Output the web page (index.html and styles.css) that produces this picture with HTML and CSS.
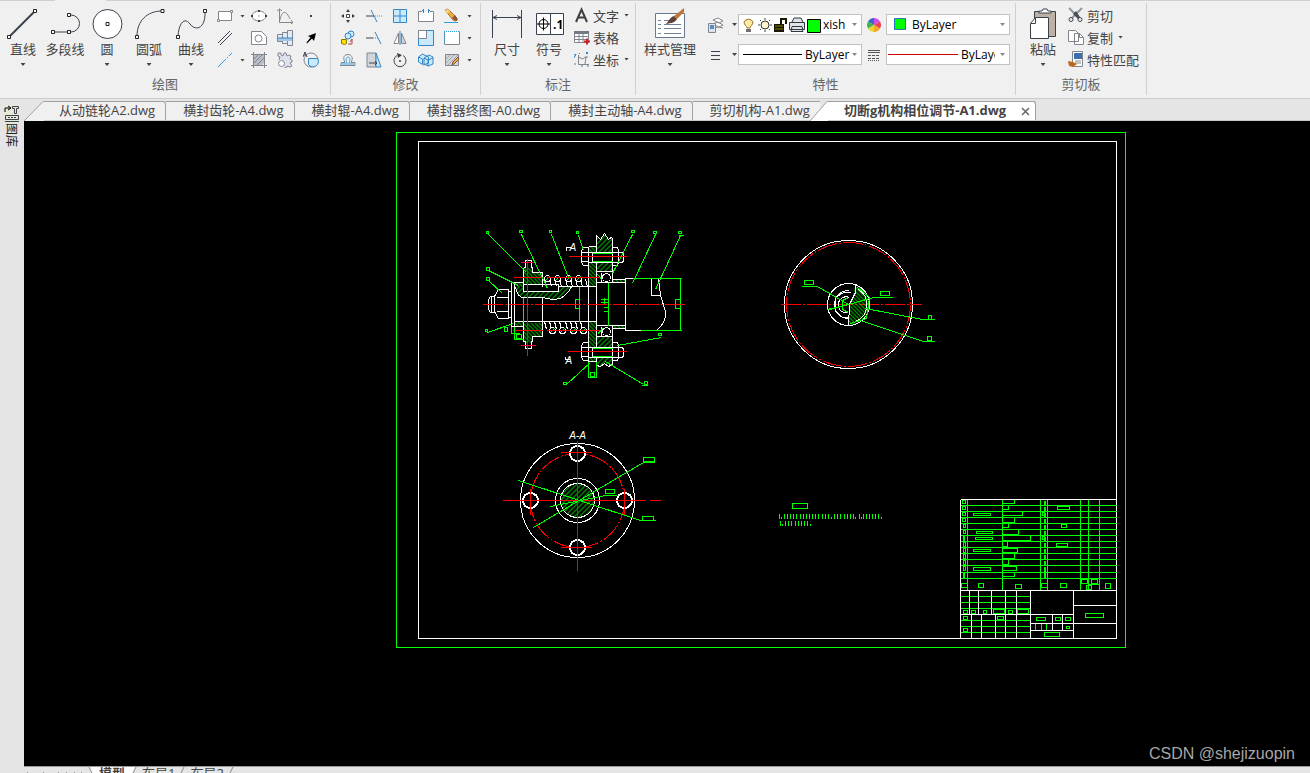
FILE: index.html
```
<!DOCTYPE html>
<html lang="zh-CN">
<head>
  <meta charset="UTF-8">
  <meta name="viewport" content="width=device-width, initial-scale=1.0">
  <title>切断机构相位调节-A1.dwg</title>
  <link rel="stylesheet" href="styles.css">
</head>
<body>
  <div class="ribbon">
    <!-- Draw -->
    <section class="group draw">
      <div class="group-body">
        <button class="big-btn">
          <svg width="32" height="32" viewBox="0 0 32 32"><path d="M3 28L28 3" class="ink thick"/><path d="M0.500 27.500h3v3h-3zM26.500 1.500h3v3h-3z" class="node"/></svg>
          <span>直线</span><i class="arrow"></i>
        </button>
        <button class="big-btn">
          <svg width="32" height="32" viewBox="0 0 32 32"><path d="M4 24H19M19 7h3a8.500 8.500 0 0 1 0 17h-3" class="ink"/><path d="M2.500 22.500h3v3h-3zM18.500 22.500h3v3h-3zM18.500 5.500h3v3h-3z" class="node"/></svg>
          <span>多段线</span>
        </button>
        <button class="big-btn">
          <svg width="32" height="32" viewBox="0 0 32 32"><circle cx="16.500" cy="16" r="14.500" class="ink fill"/><path d="M15 14.500h3v3h-3z" class="node"/></svg>
          <span>圆</span><i class="arrow"></i>
        </button>
        <button class="big-btn">
          <svg width="32" height="32" viewBox="0 0 32 32"><path d="M4 28C4 13 14 3 29 3" class="ink"/><path d="M2.500 27.500h3v3h-3zM28 1.500h3v3h-3z" class="node"/></svg>
          <span>圆弧</span><i class="arrow"></i>
        </button>
        <button class="big-btn">
          <svg width="32" height="32" viewBox="0 0 32 32"><path d="M3 28C4 14 10 9 15 16C21 24 31 20 30 3" class="ink"/><path d="M1.500 27.500h3v3h-3zM28.500 1.500h3v3h-3z" class="node"/></svg>
          <span>曲线</span><i class="arrow"></i>
        </button>
        <div class="tools draw-tools">
          <button class="tool" aria-label="矩形"><svg width="16" height="16" viewBox="0 0 16 16"><path d="M1.500 3.500h13v9h-13z" class="grey fill"/><path d="M.5 11.500h2v2h-2zM13.500 2.500h2v2h-2z" class="grey fill"/></svg><i class="arrow"></i></button>
          <button class="tool" aria-label="椭圆"><svg width="16" height="16" viewBox="0 0 16 16"><ellipse cx="8" cy="8" rx="7" ry="5" class="grey fill"/><path d="M7.500 7.500h1v1h-1zM7 2h2v2H7zM0 7h2v2H0zM14 7h2v2h-2zM7 12h2v2H7z" class="dark"/></svg></button>
          <button class="tool" aria-label="函数曲线"><svg width="16" height="16" viewBox="0 0 16 16"><path d="M2.500 1v13.500H16M0 3l2.500-2L5 3M14 12l2 2.500-2 1.500M3 12C5 2 9 2 13 11" class="grey"/></svg></button>
          <button class="tool" aria-label="点"><svg width="16" height="16" viewBox="0 0 16 16"><path d="M7 7h2v2H7z" class="dark"/></svg></button>
          <button class="tool" aria-label="平行线"><svg width="16" height="16" viewBox="0 0 16 16"><path d="M1 13L13 1M3 15L15 3" class="ink"/></svg></button>
          <button class="tool" aria-label="轮廓"><svg width="16" height="16" viewBox="0 0 16 16"><path d="M.5 1.500h10l5 5v8H.5z" class="grey fill"/><circle cx="7.500" cy="8.500" r="3.500" class="grey"/></svg></button>
          <button class="tool" aria-label="轴"><svg width="16" height="16" viewBox="0 0 16 16"><path d="M.5 4.500h5v7h-5zM5.500 2.500h5v11h-5zM10.500.500h5v15h-5z" class="grey pale"/><path d="M1 8h14v3H1z" fill="#a9c8e6"/><path d="M0 8h16" class="blue"/></svg></button>
          <button class="tool" aria-label="箭头"><svg width="16" height="16" viewBox="0 0 16 16"><path d="M13 3L11 11 9 8.500 4 13.500 3.500 12.500 7.500 7.500 5 6z" fill="#000"/></svg></button>
          <button class="tool" aria-label="中心线"><svg width="16" height="16" viewBox="0 0 16 16"><path d="M1 15L9 7M10 6l1-1M12 4l3-3" class="cyan"/></svg><i class="arrow"></i></button>
          <button class="tool" aria-label="填充"><svg width="16" height="16" viewBox="0 0 16 16"><path d="M2.500 2.500h11v8l-3 3h-8z" fill="#b8bcc4"/><path d="M3 11L11 3M3 7l4-4M6 13l7-7M2.500 0v16M0 2.500h16M0 13.500h16M13.500 0v16" class="grey"/></svg></button>
          <button class="tool" aria-label="齿轮"><svg width="16" height="16" viewBox="0 0 16 16"><path d="M1 1h3v2l2 1 1-3h2l1 3 2-1 2 1-1 3 2 1v2l-2 1 2 3-2 1-3-1-1 2H7M1 1v3l2 1-1 3" class="grey lavender"/><circle cx="4.500" cy="11.500" r="3" class="grey fill"/></svg></button>
          <button class="tool" aria-label="局部放大"><svg width="16" height="16" viewBox="0 0 16 16"><circle cx="8" cy="8" r="7" class="grey"/><path d="M5.500 6.500h9a5 5 0 0 1-9 6z" class="blue sky"/><path d="M0 5l2-5 2 5M1 3h2" class="ink"/></svg></button>
        </div>
      </div>
      <h2>绘图</h2>
    </section>

    <!-- Modify -->
    <section class="group modify">
      <div class="group-body">
        <div class="tools modify-tools">
          <button class="tool" aria-label="移动"><svg width="16" height="16" viewBox="0 0 16 16"><path d="M6.500 6.500h3v3h-3z" class="ink fill"/><path d="M8 1l2 3H6zM8 15l2-3H6zM1 8l3-2v4zM15 8l-3-2v4z" class="dark"/></svg></button>
          <button class="tool" aria-label="修剪"><svg width="16" height="16" viewBox="0 0 16 16"><path d="M5 2l6 12" class="blue"/><path d="M0 8h8" class="ink"/><path d="M9 8h7" class="cyan dots"/></svg></button>
          <button class="tool" aria-label="阵列"><svg width="16" height="16" viewBox="0 0 16 16"><path d="M1.500 1.500h13v13h-13zM8 1v14M1 8h14" class="blue sky"/></svg></button>
          <button class="tool" aria-label="打断"><svg width="16" height="16" viewBox="0 0 16 16"><path d="M4 3.500H.500v10h15v-10H12" class="grey fill"/><path d="M5.500 1v4M10.500 1v4M4 2.500h2M10 2.500h2" class="blue"/></svg></button>
          <button class="tool" aria-label="删除"><svg width="16" height="16" viewBox="0 0 16 16"><path d="M1 2l3-1 9 9-1 3-3-1z" fill="#f2ae3d" stroke="#a66b22"/><path d="M1 2l3-1 2 2-3 3z" fill="#f6d47c"/><path d="M8 10l3-3 3 5-2 1z" fill="#875638"/><path d="M0 14.500h14" class="cyan"/></svg><i class="arrow"></i></button>
          <button class="tool" aria-label="复制对象"><svg width="16" height="16" viewBox="0 0 16 16"><circle cx="11" cy="4" r="3" class="blue sky"/><circle cx="8" cy="6" r="3" class="blue sky"/><path d="M1.500 9.500h5v4l-2 1-3-1z" fill="#ffe000" stroke="#8b7800"/><path d="M8 14h4V9l-2 3" fill="none" stroke="#ad4343"/></svg></button>
          <button class="tool" aria-label="延伸"><svg width="16" height="16" viewBox="0 0 16 16"><path d="M9 2l6 12" class="blue"/><path d="M0 8h7" class="ink"/><path d="M7 8h5" class="cyan dots"/></svg></button>
          <button class="tool" aria-label="镜像"><svg width="16" height="16" viewBox="0 0 16 16"><path d="M6.500 3v10.500H2z" class="grey fill"/><path d="M9.500 3v10.500H14z" class="grey gray-fill"/><path d="M8 1v14" class="blue"/></svg></button>
          <button class="tool" aria-label="缩放"><svg width="16" height="16" viewBox="0 0 16 16"><path d="M.5.500h15v15H.5z" class="blue sky"/><path d="M.5.500h8v8h-8z" class="grey fill"/></svg></button>
          <button class="tool" aria-label="拉伸"><svg width="16" height="16" viewBox="0 0 16 16"><path d="M.5 1.500h15v13H.5z" class="fill"/><path d="M.5 1.500v13h15v-13" class="grey"/><path d="M0 1.500h16M.5 2v12" class="cyan dots"/></svg><i class="arrow"></i></button>
          <button class="tool" aria-label="偏移"><svg width="16" height="16" viewBox="0 0 16 16"><path d="M0 13.500h15v-3h-4c3-5 0-8-3-8s-6 2-3 8H1" class="grey"/><path d="M0 12h14M7 11c-2-4 0-6 1-6s3 2 1 6" class="cyan"/></svg></button>
          <button class="tool" aria-label="拉长"><svg width="16" height="16" viewBox="0 0 16 16"><path d="M1 1h9v14H1z" class="grey gray-fill"/><path d="M10 1l5 14h-5z" class="blue sky"/><path d="M3 11h8M9 9l2 2-2 2" class="ink"/></svg></button>
          <button class="tool" aria-label="旋转"><svg width="16" height="16" viewBox="0 0 16 16"><path d="M5 3.500a6 6 0 1 0 6 0" class="ink"/><path d="M5 1l5 2-4 3z" class="dark"/><circle cx="8" cy="9" r="1" class="dark"/></svg></button>
          <button class="tool" aria-label="编辑块"><svg width="16" height="16" viewBox="0 0 16 16"><path d="M.5 5l4-3 6 3v6l-5 2-5-3zM6 6l5-3 4 2v7l-5 2-4-2z" class="blue sky"/><path d="M6 6l4 2 5-2M10 8v6M.5 5l4 2v5" class="blue"/></svg></button>
          <button class="tool" aria-label="编辑填充"><svg width="16" height="16" viewBox="0 0 16 16"><path d="M1.500 2.500h13v11h-13z" class="grey gray-fill"/><path d="M2 7l4-4M2 11l8-8M4 13L14 3" class="light"/><path d="M8 13l1-3 5-5 1 2-5 5z" fill="#efad3c" stroke="#875638"/></svg><i class="arrow"></i></button>
        </div>
      </div>
      <h2>修改</h2>
    </section>

    <!-- Annotation -->
    <section class="group annotate">
      <div class="group-body">
        <button class="big-btn">
          <svg width="32" height="32" viewBox="0 0 32 32"><path d="M1.500 2v28M30.500 2v28M2 9.500h28M6 7.500l-4 2 4 2M26 7.500l4 2-4 2" class="ink"/></svg>
          <span>尺寸</span><i class="arrow"></i>
        </button>
        <button class="big-btn">
          <svg width="32" height="32" viewBox="0 0 32 32"><path d="M3.500 5.500h27v21h-27zM17.500 6v20" class="ink fill"/><circle cx="10.500" cy="16" r="4.500" class="black"/><path d="M4 16h13M10.500 9.500v13" class="black"/><text x="20" y="21" class="tol">.1</text></svg>
          <span>符号</span><i class="arrow"></i>
        </button>
        <div class="list">
          <button class="row-btn"><svg width="16" height="16" viewBox="0 0 16 16"><path d="M2 15L7.500 2.500 13 15M4 10.500h7" fill="none" stroke="#3c4043" stroke-width="2"/></svg>文字<i class="arrow"></i></button>
          <button class="row-btn"><svg width="16" height="16" viewBox="0 0 16 16"><path d="M.5 2.500h14v11H.5z" class="grey fill"/><path d="M0 2h15v3H0z" fill="#747a83"/><path d="M1 7.500h14M1 10.500h14M5 5v8M9 5v8" class="grey"/><path d="M10 12.500h6M13 9.500v6" stroke="#d21e28" stroke-width="2"/></svg>表格</button>
          <button class="row-btn"><svg width="16" height="16" viewBox="0 0 16 16"><path d="M4.500 4v9.500H15M5 6l3 2 4-2-1 7M11 6h3" class="grey"/><path d="M0 3l2 2M2 3L0 7M12 1l2 2M14 1l-2 2M5 2l1 1M0 13h2M7 15h2M13 15h2" class="blue"/></svg>坐标<i class="arrow"></i></button>
        </div>
      </div>
      <h2>标注</h2>
    </section>

    <!-- Properties -->
    <section class="group props">
      <div class="group-body">
        <button class="big-btn wide">
          <svg width="32" height="32" viewBox="0 0 32 32"><path d="M1.500 5.500h29v24h-29z" fill="#fff" stroke="#66788d"/><path d="M4 12.500h3M4 16.500h3M4 20.500h3M4 25.500h3M10 12.500h5M10 16.500h17M10 20.500h17M10 25.500h17" stroke="#71839c"/><path d="M30 0L20 8l3 3 7-7z" fill="#b97838"/><path d="M20 8l3 3c-2 4-6 4-11 5 3-3 4-7 8-8z" fill="#5f4032"/></svg>
          <span>样式管理</span><i class="arrow"></i>
        </button>
        <div class="combos">
          <button class="tool" aria-label="图层管理"><svg width="18" height="16" viewBox="0 0 18 16"><path d="M6 3l5-2 5 3-4 2zM6 7l5-2 5 3-4 2zM8 11l3-1 5 1" class="grey fill"/><path d="M1.500 6.500h7v9h-7z" class="grey lavender"/><path d="M3 8h4v4H3z" fill="#5790bf"/></svg><i class="arrow"></i></button>
          <div class="combo layer">
            <select aria-label="图层"><option>xish</option></select>
            <svg width="84" height="19" viewBox="0 0 84 19">
              <path d="M8 13c0-2-3-3-3-6a5 5 0 0 1 9 0c0 3-3 4-3 6z" fill="#ffeaa0" stroke="#947134"/><path d="M7 14h5v3H7z" fill="#6e6e6e"/>
              <circle cx="26" cy="10" r="4" fill="#fff3c8" stroke="#333"/><path d="M26 3v2M26 15v2M19 10h2M31 10h2M21 5l1 1M30 14l1 1M21 15l1-1M30 6l1-1" class="ink"/>
              <path d="M35 9h10v8H35z" fill="#171600"/><path d="M36 11h8M36 14h8" stroke="#8b8000"/><path d="M42 9V4h5v5" fill="none" stroke="#171600" stroke-width="2"/>
              <path d="M53 7l2-4h7l2 4M50.500 7.500h15v7h-15zM53 11.500h10l1 5H52z" fill="#dfe3e8" stroke="#30363e"/>
              <path d="M68.500 4.500h13v13h-13z" fill="#0f0" stroke="#000"/>
            </svg>
            <i class="arrow"></i>
          </div>
          <span class="mark"><svg width="14" height="14" viewBox="-7 -7 14 14"><path d="M0 0V-7A7 7 0 0 1 6 -3.500z" fill="#ce4cf0"/><path d="M0 0L6-3.500A7 7 0 0 1 6 3.500z" fill="#ef3f57"/><path d="M0 0L6 3.500A7 7 0 0 1 0 7z" fill="#f5a623"/><path d="M0 0V7A7 7 0 0 1-6 3.500z" fill="#ead72e"/><path d="M0 0L-6 3.500A7 7 0 0 1-6-3.500z" fill="#45b44d"/><path d="M0 0L-6-3.500A7 7 0 0 1 0-7z" fill="#3b65c9"/></svg></span>
          <div class="combo color">
            <select aria-label="颜色"><option>ByLayer</option></select>
            <svg width="20" height="19" viewBox="0 0 20 19"><path d="M7.500 3.500h11v11h-11z" fill="#0f0" stroke="#2d6fc0"/></svg>
            <i class="arrow"></i>
          </div>
          <button class="tool" aria-label="线宽设置"><svg width="18" height="16" viewBox="0 0 18 16"><path d="M4 4.500h9M4 8.500h9M4 12.500h9" class="ink"/></svg><i class="arrow"></i></button>
          <div class="combo weight">
            <select aria-label="线宽"><option>ByLayer</option></select>
            <svg width="64" height="19" viewBox="0 0 64 19"><path d="M4 9.500h59" stroke="#000"/></svg>
            <i class="arrow"></i>
          </div>
          <span class="mark"><svg width="14" height="14" viewBox="0 0 14 14"><path d="M1 2.500h12M1 4.500h12" stroke="#555"/><path d="M1 7.500h12M1 10.500h12" stroke="#555" stroke-dasharray="3 1"/><path d="M1 12.500h12" stroke="#555" stroke-dasharray="1 1"/></svg></span>
          <div class="combo linetype">
            <select aria-label="线型"><option>ByLayer</option></select>
            <svg width="72" height="19" viewBox="0 0 72 19"><path d="M1 9.500h70" stroke="#d00000"/></svg>
            <i class="arrow"></i>
          </div>
        </div>
      </div>
      <h2>特性</h2>
    </section>

    <!-- Clipboard -->
    <section class="group clip">
      <div class="group-body">
        <button class="big-btn paste">
          <svg width="32" height="32" viewBox="0 0 32 32"><path d="M7.500 3.500h21v25h-21z" fill="#bdb1a5" stroke="#3b4149"/><path d="M12 5V3h3l1-2h4l1 2h3v2z" fill="#fff" stroke="#3b4149"/><path d="M3.500 15.500l5-6h13v21h-18z" fill="#fff" stroke="#3b4149"/><path d="M4 15.500h4.500V10" fill="none" stroke="#3b4149"/></svg>
          <span>粘贴</span><i class="arrow"></i>
        </button>
        <div class="list">
          <button class="row-btn"><svg width="16" height="16" viewBox="0 0 16 16"><path d="M1 1l10 10M14 1L4 11" stroke="#9298a1" stroke-width="2"/><path d="M5 7l3-3 4 6-2 2z" fill="#4a5058"/><circle cx="3" cy="12.500" r="2" class="ink"/><circle cx="12" cy="12.500" r="2" class="ink"/></svg>剪切</button>
          <button class="row-btn"><svg width="16" height="16" viewBox="0 0 16 16"><path d="M.5 1.500h7l3 3v8H.5zM6.500 4.500h5l4 4v7h-9z" class="grey fill"/><path d="M11.500 4.500v4h4" class="grey"/></svg>复制<i class="arrow"></i></button>
          <button class="row-btn"><svg width="16" height="16" viewBox="0 0 16 16"><path d="M4.500.500h10v15h-10z" class="grey fill"/><path d="M6 2h8v6H6z" fill="#3c70ac"/><path d="M7 10h6M7 12h6" class="grey"/><path d="M0 10l5 1 4 2-4 3-4-1z" fill="#bc691d"/></svg>特性匹配</button>
        </div>
      </div>
      <h2>剪切板</h2>
    </section>
  </div>

  <div class="workspace">
    <aside class="sidebar">
      <svg width="16" height="18" viewBox="0 0 16 18"><path d="M0 0h16v18H0z" fill="#e8e8d8"/><path d="M1 7V3h5M4 1l3 2-3 2" class="black"/><path d="M8.500 1.500h6v2h-2v5h-2v-5h-2zM1.500 10.500h13v4h-13z" class="ink"/><path d="M4 12.500h2M7 12.500h2M10 12.500h2M1 16.500h14" class="ink"/></svg>
      <span>图库</span>
    </aside>

    <div class="editor">
      <nav class="file-tabs">
        <svg class="slant" width="20" height="20" viewBox="0 0 20 20"><path d="M0 20L19 .500h1V20z" fill="#f0f0f0"/><path d="M0 20L19 .500h1" fill="none" stroke="#a0a0a0"/></svg>
        <a href="#" class="first">从动链轮A2.dwg</a>
        <a href="#">横封齿轮-A4.dwg</a>
        <a href="#">横封辊-A4.dwg</a>
        <a href="#">横封器终图-A0.dwg</a>
        <a href="#">横封主动轴-A4.dwg</a>
        <a href="#" class="last">剪切机构-A1.dwg</a>
        <svg class="slant over" width="18" height="20" viewBox="0 0 18 20"><path d="M0 20L17 .500h1V20z" fill="#fff"/><path d="M0 20L17 .500h1" fill="none" stroke="#a0a0a0"/></svg>
        <a href="#" class="active">切断g机构相位调节-A1.dwg</a>
        <button class="close" aria-label="关闭"><svg width="9" height="9" viewBox="0 0 9 9"><path d="M1 1l7 7M8 1L1 8" stroke="#666" stroke-width="1.500"/></svg></button>
      </nav>

      <main class="canvas">
        <svg class="drawing" viewBox="23.500 120.500 1286 645" fill="none" shape-rendering="crispEdges">
          <defs>
            <pattern id="hatch" width="5" height="5" patternUnits="userSpaceOnUse"><path d="M0 4h1v1H0zM1 3h1v1H1zM2 2h1v1H2zM3 1h1v1H3zM4 0h1v1H4z" fill="#0f0"/></pattern>
            <pattern id="hatchBack" width="4" height="4" patternUnits="userSpaceOnUse"><path d="M0 0h1v1H0zM1 1h1v1H1zM2 2h1v1H2zM3 3h1v1H3z" fill="#0f0"/></pattern>
            <g id="bolt">
              <path d="M588 252H623V262H588z" fill="#000"/>
              <path class="w" d="M583 247H588V265H583L581 262V250zM581 252H588M581 261H588M588 252H618M588 262H618M592 252V262M612 247H617L618 250V262L617 265H612zM612 252H618M612 262H618M618 252H622L623 254V260L622 262H618"/>
              <path class="g" d="M592 253H612M592 261H612"/>
            </g>
            <g id="hex">
              <path d="M0-8L7-4V4L0 8L-7 4V-4z" fill="#000" stroke="#fff"/>
              <circle r="7" class="w"/>
              <circle r="8" class="w"/>
            </g>
          </defs>

          <!-- sheet frame -->
          <path class="g" d="M396 132H1125V647H396z"/>
          <path class="w" d="M418 141H1116V638H418z"/>

          <!-- section view: hatching -->
          <path fill="url(#hatchBack)" d="M523 267H532V272H542V284H523zM523 322H542V336H532V342H523zM514 282H523V286H514zM514 321H523V326H514zM588 246H596V286H588zM588 321H596V361H588zM612 279H625V282H612zM612 325H625V328H612z"/>
          <path fill="url(#hatch)" d="M596 235L600 239L604 233L608 239L612 237V271H596zM596 336H612V365L604 363L600 366L596 362zM515 287Q517 297 523 297H542Q556 301 563 296Q569 291 571 286H558V291H523V286z"/>
          <!-- shaft and sprocket -->
          <path class="w" d="M494 296H490L488 299V309L490 312H494M491 296V312M498 289H508V318H498L494 311V296zM496 297H508M496 311H508M508 291H511V317H508M511 282H514V326H511zM514 282H523M514 326H523"/>
          <path class="w" d="M523 267H525V260H531V267H532V272H542V286M523 267V286M524 262H531M542 321V336H532V341H531V348H525V341H523V321"/>
          <path class="w" d="M523 284H558V291H523zM558 286H596M514 321H596M542 297V321M514 286V321M515 287Q517 297 523 297H542Q556 301 563 296Q569 291 571 286"/>
          <path class="g" d="M523 297V321M579 286V321M575 299H579V308H575z"/>
          <!-- spring -->
          <path class="w" d="M544 279L546 286M549 279L551 286M554 279L556 286M559 279L561 286M565 279L567 286M570 279L572 286M575 279L577 286M580 279L582 286M585 279L587 286M544 321L546 329M549 321L551 329M554 321L556 329M559 321L561 329M565 321L567 329M570 321L572 329M575 321L577 329M580 321L582 329"/>
          <g class="w" fill="#000"><circle cx="547" cy="278" r="3"/><circle cx="557" cy="278" r="3"/><circle cx="568" cy="278" r="3"/><circle cx="578" cy="278" r="3"/><circle cx="552" cy="330" r="3"/><circle cx="562" cy="330" r="3"/><circle cx="573" cy="330" r="3"/><circle cx="583" cy="330" r="3"/></g>
          <path class="g" d="M545 280L549 276M555 280L559 276M566 280L570 276M576 280L580 276M550 332L554 328M560 332L564 328M571 332L575 328M581 332L585 328"/>
          <!-- flange and bearing -->
          <path class="w" d="M588 246H596M588 246V361H596M596 235V365M612 237V282M612 325V365M596 235L600 239L604 233L608 239L612 236M596 365L600 366L604 363L608 366L612 364M596 271H612M596 336H612M596 282H625V325H596M601 272V282M601 326V336M612 279H625M612 328H625"/>
          <circle class="w" cx="606" cy="277" r="4"/><circle class="w" cx="606" cy="331" r="4"/>
          <path class="g" d="M608 282V325M600 299H608M600 302H608M603 307H608M603 311H608M604 297V303M597 274L602 280M597 334L602 328"/>
          <use href="#bolt"/>
          <use href="#bolt" y="95"/>
          <!-- stub end -->
          <path class="w" d="M632 278H625V330H640M651 278V295H660M658 278L660 295L665 311Q666 322 656 330"/>
          <path class="g" d="M632 278H681M640 330H681M680 278V330M675 299H680V308H675z"/>
          <!-- centre lines -->
          <path class="r center" d="M482 304H686"/>
          <path class="r" d="M568 256H626M567 351H626M513 277H542M546 277H599M512 330H542M546 330H599"/>
          <path class="crimson" d="M527 258V355M520 262H535M520 345H535"/>
          <!-- leaders -->
          <path class="g" d="M488 234L526 272M521 234L547 288M551 234L568 277M578 235L583 250M632 234L612 273M655 234L632 283M680 235L655 289M488 270L518 285M488 280L502 293M487 332L513 323M566 384L590 362M643 384L605 361M661 337L617 345"/>
          <path class="g" d="M486 231h2v2h-2zM519 230h3v2h-3zM549 230h2v2h-2zM576 231h2v2h-2zM631 230h3v2h-3zM653 231h3v2h-3zM678 231h3v2h-3zM678 235h5M486 267h3v3h-3zM486 277h3v3h-3zM485 329h2v2h-2zM563 382h3v2h-3zM644 381h3v3h-3zM641 385h6M658 333h3v2h-3z"/>
          <path class="g" d="M511 326V333H519M504 327h3v4h-3zM514 326V339H523M516 334h5v4h-5zM588 361V377H596V361M590 372h4v4h-4z"/>
          <path class="w" d="M566 250V247H570M565 356V359H569"/>
          <text x="569" y="250">A</text>
          <text x="565" y="363">A</text>

          <!-- end view -->
          <circle class="w" cx="848" cy="304" r="64"/>
          <circle class="r center" cx="848" cy="304" r="62"/>
          <path class="r center" d="M780 304H921"/>
          <path fill="url(#hatchBack)" d="M855 284A21 21 0 0 1 848 325L850 306Z"/>
          <circle class="w" cx="848" cy="304" r="21"/>
          <path class="w" d="M855 284V292L849 304L848 325M850 292L843 292L835 297V311L842 317H848M848 290A14 14 0 0 0 848 318M849 297A8 8 0 1 0 848 312M858 289A18 18 0 0 1 855 321"/>
          <path class="g" d="M848 297L842 300V309L848 312M857 287L869 297L866 318L850 323"/>
          <path class="g" d="M801 286H817L848 304L827 309M830 309L873 297H892M865 308L922 319H934M860 320L923 341H934M804 280h9v4h-9zM880 291h9v4h-9zM928 315h3v4h-3zM927 336h4v4h-4z"/>

          <!-- section A-A -->
          <text x="577" y="438" text-anchor="middle">A-A</text>
          <circle class="w" cx="577" cy="500" r="57"/>
          <circle class="r center" cx="577" cy="500" r="47"/>
          <circle class="w" cx="577" cy="500" r="22"/>
          <circle cx="577" cy="500" r="17" fill="url(#hatch)" stroke="#fff"/>
          <use href="#hex" x="577" y="453"/>
          <use href="#hex" x="577" y="547"/>
          <use href="#hex" x="530" y="500"/>
          <use href="#hex" x="624" y="500"/>
          <path class="r" d="M502 500H645M649 500H660M577 440V570M560 452H591M560 547H591M530 488V514M624 488V514"/>
          <path class="g" d="M518 480L640 520H655M533 527L643 462H654M550 506L605 495H616M643 457h11v4h-11zM605 489h9v4h-9zM642 516h11v4h-11z"/>

          <!-- notes -->
          <path class="g" d="M792 503h15v5h-15z"/>
          <path class="g" d="M779 513v5M784 513v5M787 513v5M790 513v5M793 513v5M796 513v5M800 513v5M803 513v5M806 513v5M809 513v5M812 513v5M815 513v5M818 513v5M822 513v5M825 513v5M828 513v5M834 513v5M837 513v5M840 513v5M844 513v5M847 513v5M850 513v5M853 513v5M859 513v5M863 513v5M866 513v5M869 513v5M872 513v5M875 513v5M878 513v5M781 516v2M831 516v2M855 516v2M861 516v2M881 516v2"/>
          <path class="g" d="M780 520v5M785 520v5M788 520v5M791 520v5M795 520v5M798 520v5M801 520v5M804 520v5M807 520v5M782 523v2M810 523v2"/>

          <!-- parts list -->
          <path class="g" d="M960 505H1116M960 511H1116M960 517H1116M960 523H1116M960 529H1116M960 535H1116M960 541H1116M960 547H1116M960 553H1116M960 559H1116M960 565H1116M960 572H1116M960 578H1116M967 499V590M1002 499V590M1040 499V590M1047 499V590M1080 499V590M1088 499V590M1099 499V590"/>
          <path class="g" d="M962 500h3v3h-3zM962 506h3v3h-3zM962 512h3v3h-3zM962 518h3v3h-3zM963 524h2v3h-2zM963 530h2v3h-2zM963 536h1v4h-1zM963 542h2v4h-2zM963 548h2v4h-2zM963 554h2v4h-2zM963 560h2v4h-2zM963 566h2v4h-2zM963 573h1v4h-1z"/>
          <path class="g" d="M973 513h17v2h-17zM976 531h16v2h-16zM975 537h17v2h-17zM973 549h17v2h-17zM973 567h17v3h-17z"/>
          <path class="g" d="M1002 503H1014V499M1002 509H1008V505M1002 515H1022V511M1002 522H1014V517M1002 527H1008V523M1002 534H1018V529M1002 540H1030V535M1002 546H1007V541M1002 552H1017V548H1002M1002 558H1014V553M1002 564H1008V559M1002 570H1016V566H1002M1002 576H1014V572"/>
          <path stroke="#0f0" stroke-width="2" stroke-dasharray="5 1" d="M1044 500V577"/>
          <path class="g" d="M1042 512h2v3h-2zM1042 536h2v3h-2zM1057 506h12v3h-12zM1061 524h5v3h-5zM1056 543h11v3h-11z"/>
          <path class="g" d="M961 583h6v4h-6zM978 583h5v4h-5zM1015 584h6v4h-6zM1041 583h6v4h-6zM1060 583h6v4h-6zM1081 579h6v4h-6zM1091 579h6v4h-6zM1086 585h5v4h-5zM1088 584H1099M1105 583h5v5h-5z"/>
          <!-- title block -->
          <path class="g" d="M960 596H1030M960 602H1030M960 608H1030M960 620H1030M960 626H1030M960 632H1030M1035 623V630M1041 623V630M1046 623V630"/>
          <path class="w" d="M960 499V638M960 499H1116M960 590H1116M960 614H1073M1030 590V638M1073 590V638M1073 605H1116M1030 623H1116M1030 630H1073M969 590V614M978 590V614M991 590V614M1005 590V638M1016 590V638M971 614V638M981 614V638M995 614V638M1052 614V630M1062 614V630"/>
          <path class="g" d="M963 610h4v3h-4zM971 610h4v3h-4zM983 610h3v3h-3zM993 609h11v4h-11zM1008 610h4v3h-4zM1017 609h11v4h-11zM963 616h4v3h-4zM997 616h6v3h-6zM963 628h4v3h-4zM1036 617h9v3h-9zM1055 617h5v3h-5zM1065 617h5v3h-5zM1066 626h3v2h-3zM1044 632h15v4h-15zM1085 613h18v4h-18z"/>
        </svg>
        <span class="watermark">CSDN @shejizuopin</span>
      </main>

      <nav class="layout-tabs">
        <svg width="64" height="6" viewBox="0 0 64 6"><path d="M3 5.500h1M19 5.500h1M34 5.500h1M42 5.500h1M50 5.500h1M57 5.500h1" stroke="#999"/></svg>
        <svg width="5" height="6" viewBox="0 0 5 6"><path d="M1 0h4v6H4z" fill="#fff"/><path d="M1 0l3 6" stroke="#888"/></svg>
        <a href="#" class="current">模型</a>
        <svg width="5" height="6" viewBox="0 0 5 6"><path d="M0 0h4L1 6H0z" fill="#fff"/><path d="M4 0L1 6" stroke="#888"/></svg>
        <a href="#">布局1</a>
        <svg width="5" height="6" viewBox="0 0 5 6"><path d="M4 0L1 6" stroke="#888"/></svg>
        <a href="#">布局2</a>
        <svg width="5" height="6" viewBox="0 0 5 6"><path d="M4 0L1 6" stroke="#888"/></svg>
      </nav>
    </div>
  </div>
</body>
</html>
```
FILE: styles.css
```
* {
  box-sizing: border-box;
}

body {
  margin: 0;
  height: 100vh;
  display: flex;
  flex-direction: column;
  overflow: hidden;
  font-family: "Open Sans", "Noto Sans CJK SC", sans-serif;
  font-size: 13px;
  color: #444;
  background: #e5e5e5;
}

button {
  font: inherit;
  color: inherit;
  padding: 0;
  border: none;
  background: none;
  cursor: pointer;
}

a {
  color: inherit;
  text-decoration: none;
}

svg {
  display: block;
  flex: none;
}

/* Ribbon */
.ribbon {
  position: relative;
  display: flex;
  flex: none;
  padding: 2px 0 3px;
  background: #f0f0f0;
  border-top: 1px solid #d0d0d0;
  border-bottom: 1px solid #ccc;
}

/* gap under the open ribbon tab */
.ribbon::before {
  content: "";
  position: absolute;
  top: -1px;
  left: 55px;
  width: 51px;
  height: 1px;
  background: #f0f0f0;
}

.group {
  display: flex;
  flex-direction: column;
  padding: 2px 0;
  border-right: 1px solid #d0d0d0;
}

.group-body {
  display: flex;
  height: 66px;
}

.group h2 {
  margin: 6px 0 2px;
  font-size: 13px;
  line-height: 14px;
  font-weight: normal;
  text-align: center;
  color: #666;
}

.draw .group-body {
  padding: 0 6px 0 2px;
}

.modify .group-body {
  padding: 0 5px 0 4px;
}

.annotate .group-body {
  padding: 0 6px 0 5px;
}

.props .group-body {
  padding: 0 5px 0 2px;
}

.clip .group-body {
  padding: 0 7px 0 6px;
}

.big-btn {
  display: flex;
  flex-direction: column;
  align-items: center;
  width: 42px;
  padding-top: 3px;
}

.big-btn span {
  line-height: 18px;
  white-space: nowrap;
}

.big-btn.wide {
  width: 64px;
}

.arrow {
  width: 5px;
  height: 3px;
  background: #444;
  clip-path: polygon(0 0, 100% 0, 50% 100%);
}

.big-btn .arrow {
  margin-top: 5px;
}

.tools {
  display: grid;
  grid-auto-rows: 22px;
}

.draw-tools {
  grid-template-columns: 34px 26px 26px 26px;
}

.modify-tools {
  grid-template-columns: 26px 26px 26px 26px 36px;
}

.tool {
  display: flex;
  align-items: center;
  gap: 7px;
  padding-left: 5px;
}

.list {
  display: flex;
  flex-direction: column;
  padding-left: 4px;
}

.row-btn {
  display: flex;
  align-items: center;
  gap: 3px;
  height: 22px;
  padding-bottom: 2px;
  white-space: nowrap;
}

.row-btn .arrow {
  margin-left: 2px;
}

.combos {
  display: grid;
  grid-template-columns: 36px 124px 24px 124px;
  grid-template-rows: 21px 21px;
  row-gap: 9px;
  padding-top: 9px;
}

.mark {
  display: flex;
  align-items: center;
  justify-content: center;
}

.combo {
  position: relative;
}

.combo select {
  width: 100%;
  height: 21px;
  padding: 0 14px 0 0;
  border: 1px solid #c2c2c2;
  border-radius: 0;
  background: #fff;
  appearance: none;
  font-family: inherit;
  font-size: 12px;
  color: #000;
}

.combo svg {
  position: absolute;
  top: 1px;
  left: 1px;
  pointer-events: none;
}

.combo .arrow {
  position: absolute;
  top: 9px;
  right: 5px;
  background: #888;
  pointer-events: none;
}

.layer select {
  padding-left: 84px;
}

.color select {
  padding-left: 25px;
}

.weight select {
  padding-left: 66px;
  padding-right: 10px;
}

.linetype select {
  padding-left: 74px;
}

/* Icon strokes */
.ink {
  fill: none;
  stroke: #3c4350;
}

.thick {
  stroke-width: 2;
}

.black {
  fill: none;
  stroke: #000;
}

.grey {
  fill: none;
  stroke: #81868e;
}

.light {
  stroke: #a4a8af;
}

.blue {
  fill: none;
  stroke: #3584c4;
}

.cyan {
  fill: none;
  stroke: #2c9fda;
}

.node {
  fill: #fff;
  stroke: #222;
}

.fill {
  fill: #fff;
}

.dark {
  fill: #3c4043;
}

.sky {
  fill: #c9eafa;
}

.pale {
  fill: #e1ecf8;
}

.lavender {
  fill: #dfe1ee;
}

.gray-fill {
  fill: #d2d4d8;
}

.dots {
  stroke-dasharray: 1 1;
}

.tol {
  font-family: "Open Sans", sans-serif;
  font-size: 12px;
  font-weight: bold;
  fill: #000;
}

/* Workspace */
.workspace {
  display: flex;
  flex: 1;
  min-height: 0;
}

.sidebar {
  width: 24px;
  flex: none;
  padding: 6px 4px;
}

.sidebar span {
  writing-mode: vertical-rl;
  text-orientation: sideways;
  font-size: 12px;
  line-height: 14px;
  color: #222;
}

.editor {
  display: flex;
  flex-direction: column;
  flex: 1;
  min-width: 0;
}

.file-tabs {
  display: flex;
  flex: none;
  height: 22px;
  padding-top: 2px;
  border-bottom: 1px solid #c8c8c8;
}

.file-tabs a {
  padding: 0 10px 0 17px;
  line-height: 17px;
  white-space: nowrap;
  background: #f0f0f0;
  border-top: 1px solid #a0a0a0;
  border-right: 1px solid #a0a0a0;
  border-radius: 0 3px 0 0;
}

.file-tabs .first {
  padding-left: 15px;
}

.file-tabs .last {
  border-right: none;
  border-radius: 0;
}

.file-tabs .active {
  padding-left: 16px;
  background: #fff;
  border-right: none;
  border-radius: 0;
  font-weight: bold;
}

.file-tabs .over {
  margin-left: -10px;
}

.close {
  display: flex;
  align-items: center;
  justify-content: center;
  width: 20px;
  background: #fff;
  border-top: 1px solid #a0a0a0;
  border-right: 1px solid #a0a0a0;
  border-radius: 0 3px 0 0;
}

.canvas {
  position: relative;
  flex: 1;
  min-height: 0;
  background: #000;
}

.drawing {
  width: 100%;
  height: 100%;
}

.drawing text {
  font-family: "Liberation Sans", sans-serif;
  font-size: 10px;
  font-style: italic;
  fill: #fff;
}

.w {
  stroke: #fff;
}

.g {
  stroke: #0f0;
}

.r {
  stroke: #f00;
}

.crimson {
  stroke: #f03;
}

.center {
  stroke-dasharray: 20 2 2 2;
}

.watermark {
  position: absolute;
  right: 15px;
  bottom: 2px;
  font-family: "Liberation Sans", sans-serif;
  font-size: 16px;
  line-height: 20px;
  color: #a6a6a6;
}

.layout-tabs {
  display: flex;
  flex: none;
  height: 7px;
  overflow: hidden;
  border-top: 1px solid #999;
}

.layout-tabs a {
  padding: 0 5px;
  line-height: 12px;
  white-space: nowrap;
}

.layout-tabs .current {
  padding: 0 7px 0 6px;
  background: #fff;
  font-weight: bold;
}
```
